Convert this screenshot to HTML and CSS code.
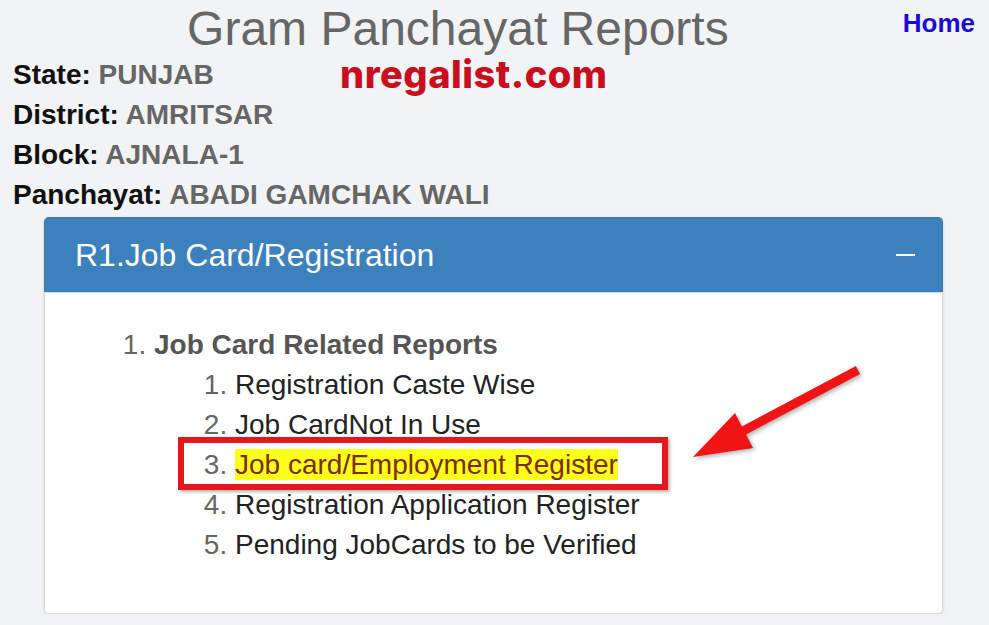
FILE: index.html
```html
<!DOCTYPE html>
<html lang="en">
<head>
    <meta charset="UTF-8">
    <meta name="viewport" content="width=device-width, initial-scale=1.0">
    <title>Gram Panchayat Reports</title>
    <link rel="stylesheet" href="styles.css">
</head>
<body>
    <div class="page">
        <!-- Top line -->
        <div class="top">
            <h1 class="title">Gram Panchayat Reports</h1>
            <a href="#" class="home">Home</a>
        </div>

        <!-- Location info -->
        <div class="info">
            <p><b>State:</b> <span>PUNJAB</span></p>
            <p><b>District:</b> <span>AMRITSAR</span></p>
            <p><b>Block:</b> <span>AJNALA-1</span></p>
            <p><b>Panchayat:</b> <span>ABADI GAMCHAK WALI</span></p>
        </div>

        <!-- Reports panel -->
        <div class="panel">
            <div class="panel-head">
                <span class="panel-title">R1.Job Card/Registration</span>
                <span class="collapse"></span>
            </div>
            <div class="panel-body">
                <ol class="reports">
                    <li>
                        <b>Job Card Related Reports</b>
                        <ol class="sub">
                            <li>Registration Caste Wise</li>
                            <li>Job CardNot In Use</li>
                            <li class="marked"><span class="mark">Job card/Employment Register</span></li>
                            <li>Registration Application Register</li>
                            <li>Pending JobCards to be Verified</li>
                        </ol>
                    </li>
                </ol>
            </div>
        </div>
    </div>

    <div class="watermark">nregalist.com</div>

    <svg class="arrow" width="989" height="625" viewBox="0 0 989 625">
        <polygon points="855.9,366 741.9,426.5 735,413 693,457 753,448 746.1,434.5 860.1,374" fill="#f01414"/>
    </svg>
</body>
</html>
```

FILE: styles.css
```css
body {
    font-family: "Liberation Sans", Arial, sans-serif;
    background-color: #f2f3f5;
    margin: 0;
    padding: 0;
}

.page {
    padding: 0 14px 0 13px;
}

.top {
    display: flex;
    align-items: flex-start;
}

.title {
    flex: 1;
    margin: 0;
    padding-top: 3px;
    font-size: 48px;
    line-height: 52px;
    font-weight: normal;
    color: #666;
    text-align: center;
}

.home {
    margin-top: 8px;
    font-size: 26px;
    line-height: 30px;
    font-weight: bold;
    color: #1b0ad6;
    text-decoration: none;
}

.info p {
    margin: 0;
    font-size: 28px;
    line-height: 40px;
    font-weight: bold;
    color: #111;
}

.info span {
    color: #666;
}

.panel {
    margin: 2px 32px 0 31px;
    border-radius: 5px;
    box-shadow: 0 1px 3px rgba(0,0,0,0.15);
}

.panel-head {
    display: flex;
    align-items: center;
    height: 74px;
    padding: 0 27px 0 30px;
    background-color: #3d80be;
    border: 1px solid #3a78b2;
    border-bottom: none;
    border-radius: 5px 5px 0 0;
    color: white;
}

.panel-title {
    font-size: 32px;
    line-height: 36px;
}

.collapse {
    margin-left: auto;
    width: 19px;
    height: 2px;
    background-color: white;
}

.panel-body {
    background-color: white;
    border: 1px solid #dcdcdc;
    border-top: 1px solid #c9dced;
    border-radius: 0 0 5px 5px;
    padding: 32px 0 48px;
}

.reports,
.sub {
    margin: 0;
    font-size: 28px;
    line-height: 40px;
}

.reports {
    padding-left: 109px;
    color: #555;
}

.sub {
    padding-left: 81px;
    color: #222;
}

li::marker {
    color: #666;
}

.marked {
    position: relative;
}

    .marked::after {
        content: "";
        position: absolute;
        left: -57px;
        top: -8px;
        width: 490px;
        height: 53px;
        box-sizing: border-box;
        border: 6px solid #e5161c;
        box-shadow: 2px 2px 3px rgba(0,0,0,0.3);
    }

.mark {
    background-color: #ffff1c;
    color: #7c2c00;
}

.watermark {
    position: absolute;
    left: 340px;
    top: 55px;
    font-family: Inter, "Noto Sans", sans-serif;
    font-size: 38px;
    line-height: 38px;
    letter-spacing: 0.5px;
    font-weight: 800;
    color: #c80f1f;
}

.arrow {
    position: absolute;
    left: 0;
    top: 0;
    pointer-events: none;
    filter: drop-shadow(2px 2px 2px rgba(0,0,0,0.3));
}
```
